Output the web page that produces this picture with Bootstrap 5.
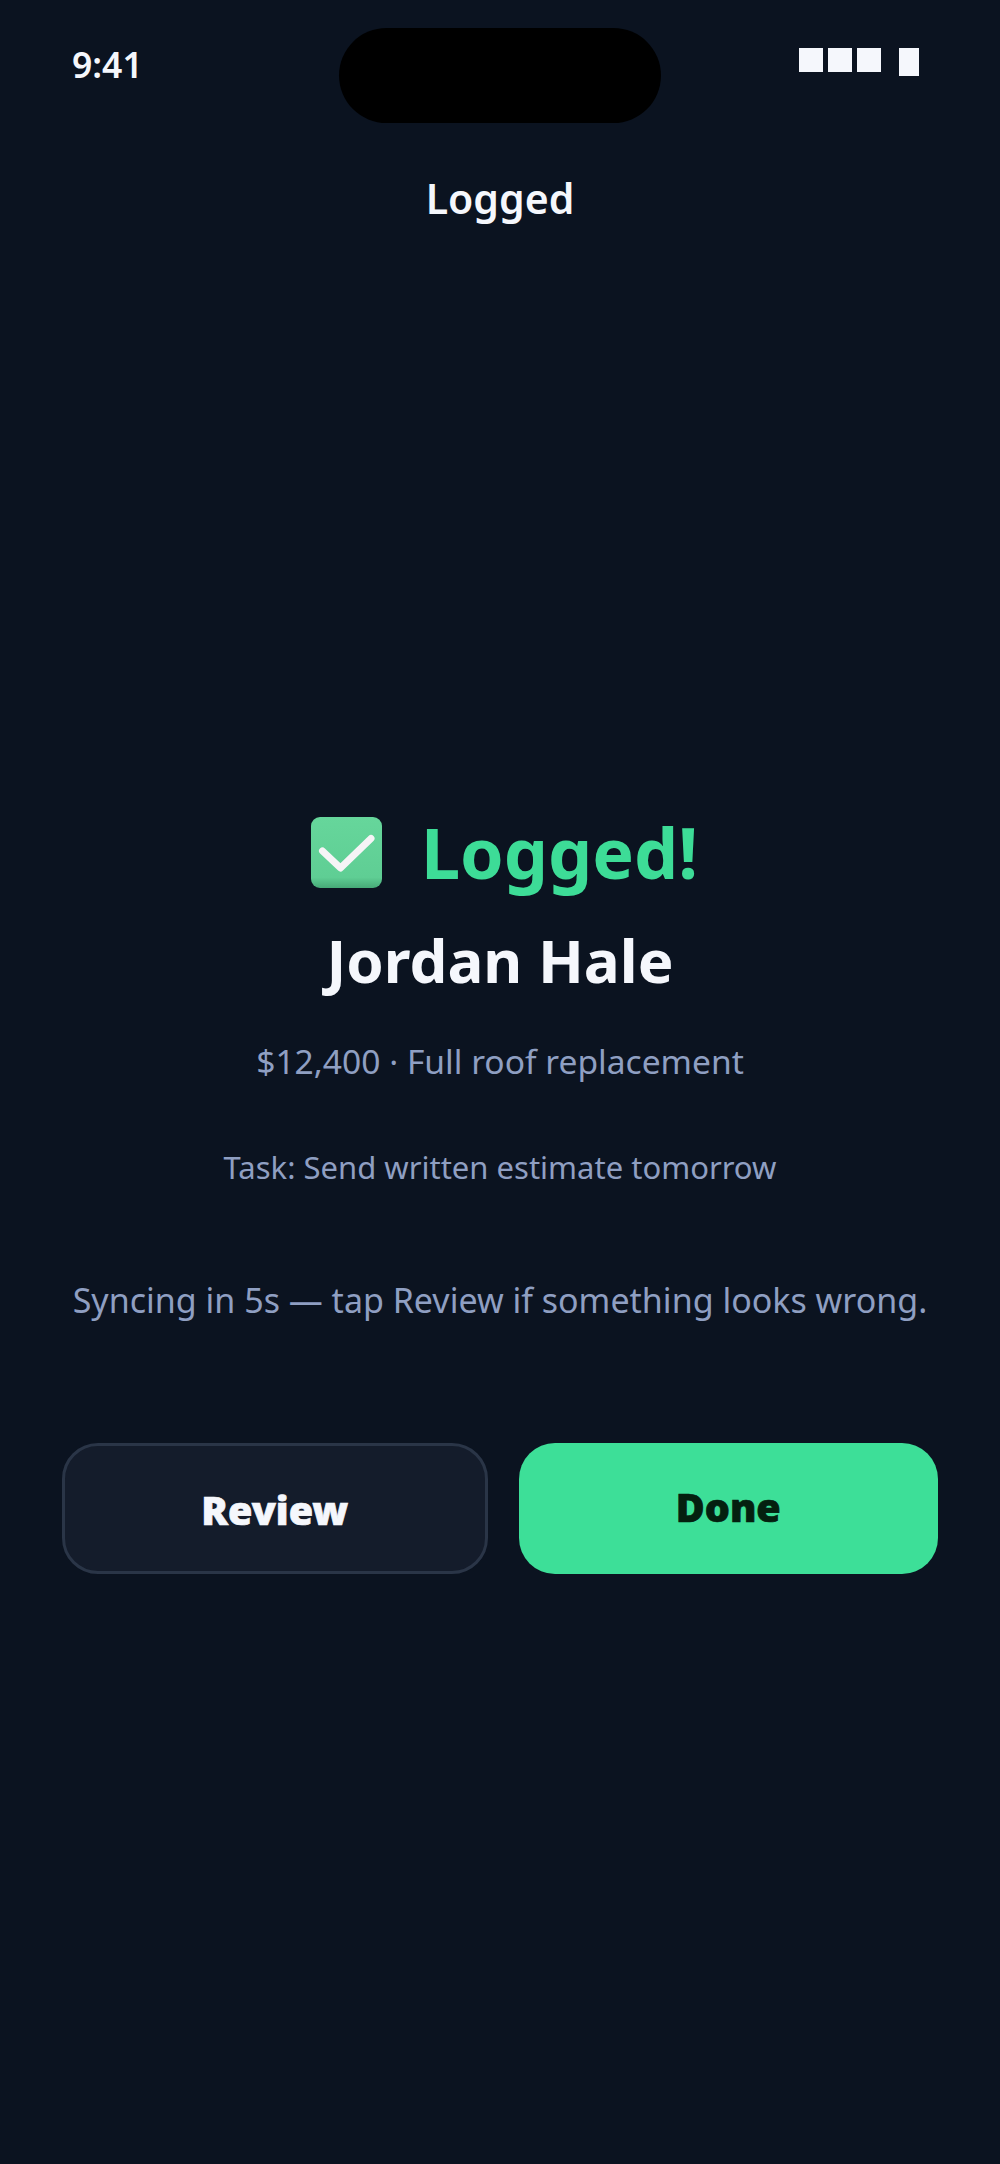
<!DOCTYPE html>
<html lang="en">
<head>
<meta charset="utf-8">
<title>Logged</title>
<link href="https://cdn.jsdelivr.net/npm/bootstrap@5.3.0/dist/css/bootstrap.min.css" rel="stylesheet">
<style>
html,body{height:100%}
body{background:#0b1320;color:#f5f7fc;font-family:"Noto Sans","Open Sans",sans-serif;overflow:hidden}
.phone{height:2164px}
.status-row{height:123px;padding:0 72px 0 72px;position:relative}
.clock{font-size:35.5px;font-weight:600;line-height:46px;margin-top:41px}
.island{position:absolute;left:339px;top:28px;width:322px;height:95px;border-radius:48px;background:#000}
.sig{margin-top:48px;padding-right:9px}
.sq{width:24px;height:24px;background:#f5f7fc;margin-right:5px}
.bat{width:20px;height:28px;background:#f5f7fc;margin-left:13px}
.title-line{font-size:41px;font-weight:600;line-height:56px;margin-top:47px}
.mid{flex:1 1 auto;padding:584px 62px 0}
.head-line{font-size:70px;font-weight:700;color:#3ddc97;line-height:84px;gap:39px;padding-left:9px}
.tick{width:71px;height:71px;flex:none}
.person{font-size:60px;font-weight:700;line-height:78px;margin-top:27px}
.sub-a{font-size:33.6px;color:#8f9fc2;line-height:48px;margin-top:38px}
.sub-b{font-size:31px;color:#8f9fc2;line-height:46px;margin-top:59px}
.sub-c{font-size:34px;color:#8f9fc2;line-height:48px;margin-top:86px}
.acts{gap:31px;margin-top:119px}
.act{flex:1 1 0;font-size:39.5px;font-weight:900;line-height:52px;padding:38px 20px 35px;border-radius:36px;text-align:center;text-decoration:none;-webkit-text-stroke:.7px currentColor}
.act-ghost{background:#141c2b;border:3px solid #2a3547;color:#f5f7fc}
.act-main{background:#3ddf98;color:#04200f}
</style>
</head>
<body>
<div class="phone d-flex flex-column">
  <div class="status-row d-flex justify-content-between align-items-start">
    <div class="clock">9:41</div>
    <div class="island"></div>
    <div class="sig d-flex align-items-start">
      <span class="sq"></span><span class="sq"></span><span class="sq"></span><span class="bat"></span>
    </div>
  </div>
  <div class="title-line text-center">Logged</div>
  <div class="mid text-center">
    <div class="head-line d-flex justify-content-center align-items-center">
      <svg class="tick" viewBox="0 0 71 71" aria-hidden="true">
        <defs>
          <linearGradient id="edge" x1="0" y1="0" x2="0" y2="1">
            <stop offset="0" stop-color="#66d69b"/><stop offset=".85" stop-color="#5fce94"/><stop offset="1" stop-color="#46a977"/>
          </linearGradient>
        </defs>
        <rect width="71" height="71" rx="9" fill="url(#edge)"/>
        <path d="M11.5 34 29.5 51 60 21.5" fill="none" stroke="#f6f4f6" stroke-width="7" stroke-linecap="round" stroke-linejoin="round"/>
      </svg>
      <span>Logged!</span>
    </div>
    <div class="person">Jordan Hale</div>
    <div class="sub-a">$12,400 · Full roof replacement</div>
    <div class="sub-b">Task: Send written estimate tomorrow</div>
    <div class="sub-c">Syncing in 5s — tap Review if something looks wrong.</div>
    <div class="acts d-flex align-items-stretch">
      <a class="act act-ghost" href="#">Review</a>
      <a class="act act-main" href="#">Done</a>
    </div>
  </div>
</div>
<script src="https://cdn.jsdelivr.net/npm/bootstrap@5.3.0/dist/js/bootstrap.bundle.min.js"></script>
</body>
</html>
